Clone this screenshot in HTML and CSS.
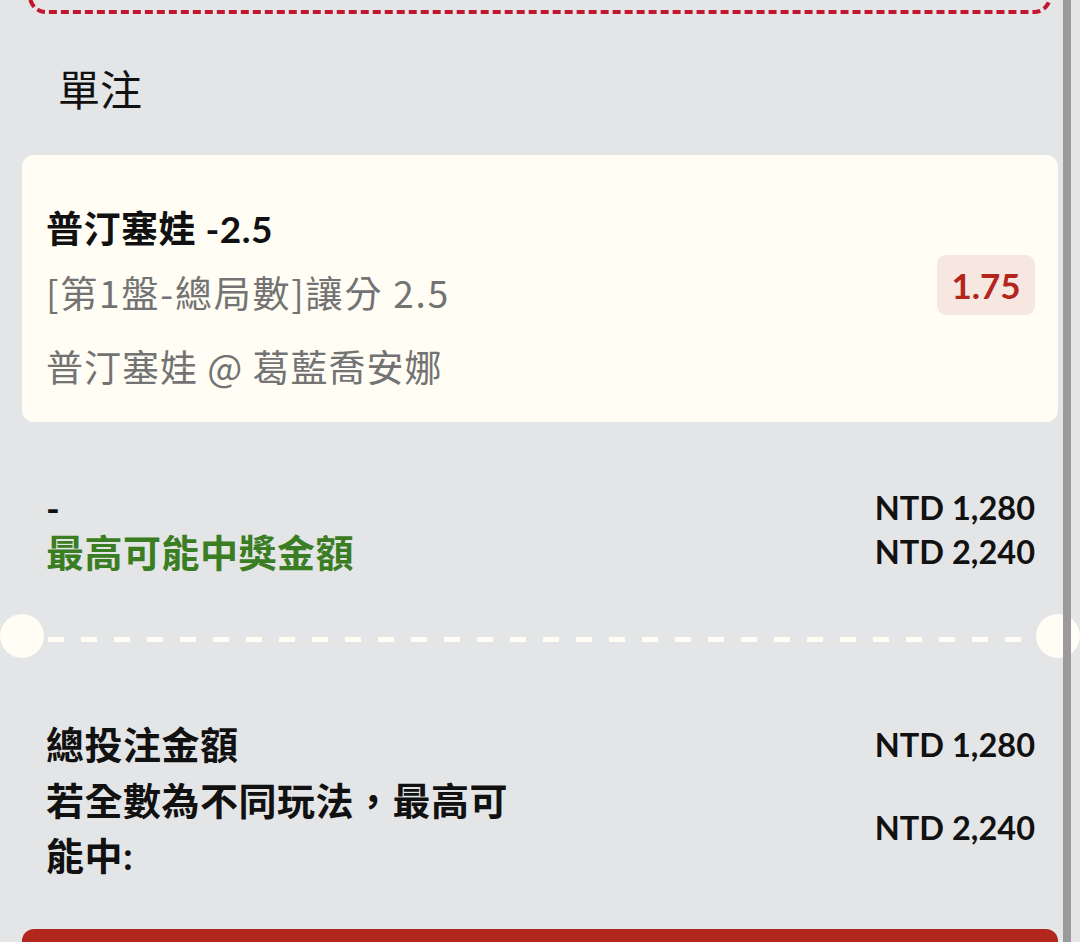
FILE: index.html
```html
<!DOCTYPE html>
<html lang="zh-Hant">
<head>
  <meta charset="UTF-8">
  <title>投注單</title>
  <meta name="viewport" content="width=device-width, initial-scale=1.0">
  <link rel="stylesheet" href="styles.css">
</head>
<body>
  <div class="screen">
    <!-- poprzednia karta, widać tylko dół -->
    <div class="prev-card"></div>

    <h2 class="section-title">單注</h2>

    <div class="bet-card">
      <div class="bet-info">
        <div class="bet-pick">普汀塞娃 -2.5</div>
        <div class="bet-market">[第1盤-總局數]讓分 2.5</div>
        <div class="bet-match">普汀塞娃 @ 葛藍喬安娜</div>
      </div>
      <div class="odds">1.75</div>
    </div>

    <div class="summary">
      <div class="sum-row">
        <span class="sum-label">-</span>
        <span class="amount">NTD 1,280</span>
      </div>
      <div class="sum-row">
        <span class="sum-label win">最高可能中獎金額</span>
        <span class="amount">NTD 2,240</span>
      </div>
    </div>

    <div class="divider">
      <span class="notch"></span>
      <span class="dash-line"></span>
      <span class="notch"></span>
    </div>

    <div class="totals">
      <div class="total-row">
        <span class="total-label">總投注金額</span>
        <span class="amount">NTD 1,280</span>
      </div>
      <div class="total-row">
        <span class="total-label">若全數為不同玩法，最高可能中:</span>
        <span class="amount">NTD 2,240</span>
      </div>
    </div>

    <button class="place-btn" type="button" aria-label="投注"></button>

    <div class="scroll-thumb"></div>
  </div>
</body>
</html>
```

FILE: styles.css
```css
html,body{margin:0;padding:0}
body{background:#e4e5e7;font-family:Lato,"Noto Sans CJK TC",sans-serif;color:#111}

.screen{position:relative;height:100vh;overflow:hidden;display:flex;flex-direction:column}

.prev-card{margin:-46px 28px 0;height:60px;box-sizing:border-box;border:4px dashed #c0172f;
           border-radius:18px;flex:none}

.section-title{margin:44px 0 0 58px;font-size:42px;line-height:60px;font-weight:400;
               font-family:"Noto Sans CJK TC",sans-serif;color:#111}

/* karta zakładu */
.bet-card{margin:37px 22px 0;background:#fffdf4;border-radius:12px;height:267px;box-sizing:border-box;
          padding:50px 23px 0 24px;display:flex;justify-content:space-between;align-items:flex-start;flex:none}
.bet-pick{font-size:37px;line-height:48px;font-weight:700;letter-spacing:.5px}
.bet-market,.bet-match{font-family:"Noto Sans CJK TC",sans-serif;font-size:37px;line-height:50px;
                       color:#737373;letter-spacing:1px}
.bet-market{margin-top:14px;letter-spacing:1.8px}
.bet-match{margin-top:24px}
.odds{margin-top:50px;background:#f7e7e1;color:#b3261e;font-weight:700;font-size:35px;
      border-radius:9px;width:98px;height:60px;display:flex;align-items:center;justify-content:center}

/* podsumowanie */
.summary{padding:64px 45px 0 46px}
.sum-row{display:flex;justify-content:space-between;align-items:center;line-height:44px}
.sum-label{font-size:37px;font-weight:700}
.sum-label.win{color:#3b7d23;font-size:38px;letter-spacing:.5px}
.amount{font-size:32.5px;font-weight:700;white-space:nowrap}

/* separator z wycięciami */
.divider{margin-top:40px;display:flex;align-items:center;flex:none}
.notch{width:44px;height:44px;border-radius:50%;background:#fffdf4;flex:none}
.dash-line{flex:1;height:5px;margin:6px 4px 0;
           background:repeating-linear-gradient(90deg,#fffdf4 0 16px,transparent 16px 33px)}

.totals{padding:59px 45px 0 46px}
.total-row{display:flex;justify-content:space-between;align-items:center;line-height:55.5px}
.total-label{font-size:38px;font-weight:700;letter-spacing:.5px;max-width:480px}

.place-btn{margin:45px 22px 0;height:140px;border:none;border-radius:12px;background:#b2261e;flex:none}

.scroll-thumb{position:absolute;top:0;right:9px;width:8px;height:100%;background:#9a9a9a}
```
